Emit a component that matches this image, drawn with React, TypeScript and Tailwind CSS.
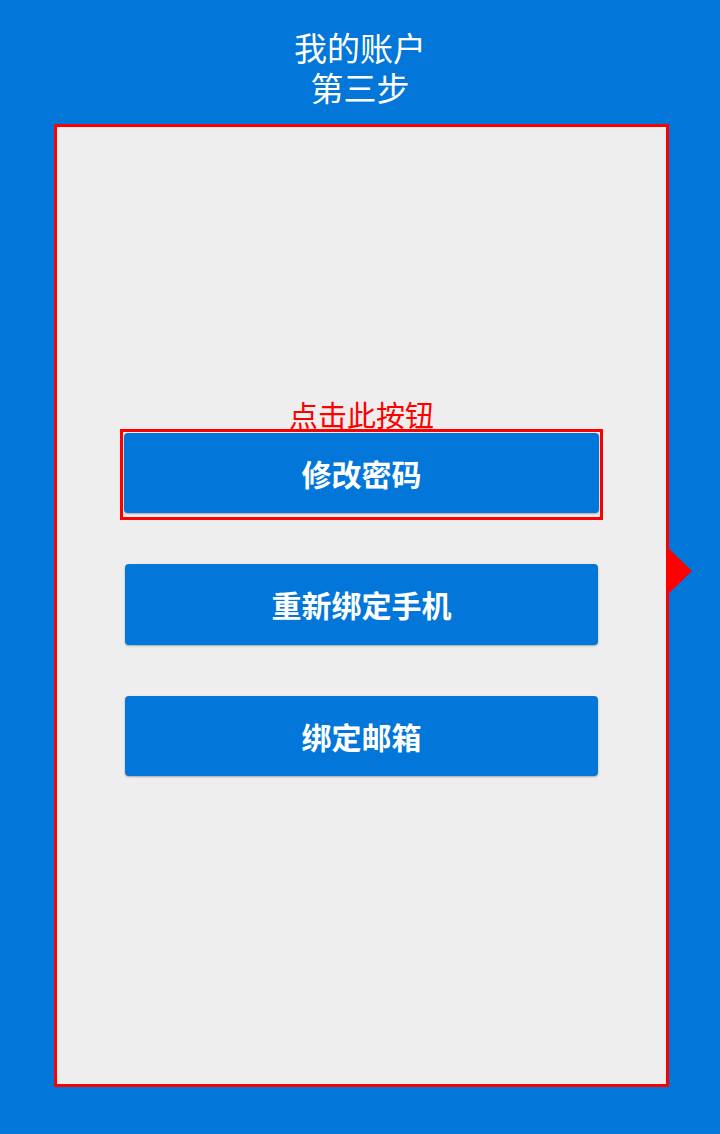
export default function App() {
  const font = { fontFamily: '"Noto Sans CJK SC", "Noto Sans", sans-serif' }
  return (
    <div className="w-[720px] h-[1134px] bg-[#0277d9] pt-[27px] overflow-hidden" style={font}>
      <div className="text-center text-white text-[33px] leading-[40px]">
        <div>我的账户</div>
        <div>第三步</div>
      </div>

      <div className="relative mt-[17px] ml-[54px] w-[615px] h-[963px] border-[3px] border-[#ff0000] bg-[#eeeeee]">
        <div className="flex flex-col pt-[272px]">
          <div className="text-center text-[#ff0000] text-[29px] leading-[30px]">点击此按钮</div>

          <div className="ml-[63px] w-[483px] border-[3px] border-[#ff0000] p-[1px] pb-[4px]">
            <button className="w-full h-[80px] rounded bg-[#0277d9] text-white text-[30px] font-bold shadow-[0_1px_2px_rgba(0,0,0,0.3)]">
              修改密码
            </button>
          </div>

          <button className="ml-[68px] mt-[44px] w-[473px] h-[81px] rounded bg-[#0277d9] text-white text-[30px] font-bold shadow-[0_1px_2px_rgba(0,0,0,0.3)]">
            重新绑定手机
          </button>

          <button className="ml-[68px] mt-[51px] w-[473px] h-[80px] rounded bg-[#0277d9] text-white text-[30px] font-bold shadow-[0_1px_2px_rgba(0,0,0,0.3)]">
            绑定邮箱
          </button>
        </div>

        {/* pointer arrow on the right edge */}
        <svg className="absolute left-full top-[419px]" width="26" height="50" viewBox="0 0 26 50">
          <polygon points="0,0 26,25 0,50" fill="#ff0000" />
        </svg>
      </div>
    </div>
  )
}
